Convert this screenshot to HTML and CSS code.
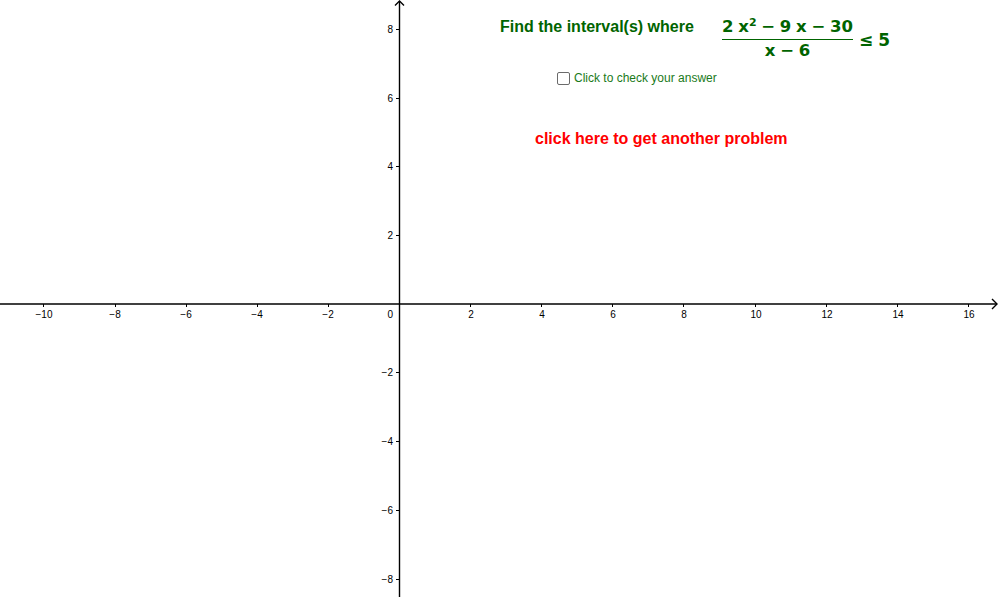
FILE: index.html
```html
<!DOCTYPE html>
<html>
<head>
<meta charset="utf-8">
<link rel="stylesheet" href="styles.css">
</head>
<body>
<div class="canvas">
  <svg class="axes" width="1000" height="600" viewBox="0 0 1000 600">
    <g class="lines">
      <line x1="0" y1="304" x2="997" y2="304"/>
      <polyline points="992,299 997,304 992,309" fill="none"/>
      <line x1="399.5" y1="1" x2="399.5" y2="597"/>
      <polyline points="395,5.5 399.5,1 404,5.5" fill="none"/>
    </g>
    <g class="ticks">
      <line x1="43.5" y1="304" x2="43.5" y2="307"/>
      <line x1="115.5" y1="304" x2="115.5" y2="307"/>
      <line x1="186.5" y1="304" x2="186.5" y2="307"/>
      <line x1="257.5" y1="304" x2="257.5" y2="307"/>
      <line x1="328.5" y1="304" x2="328.5" y2="307"/>
      <line x1="470.5" y1="304" x2="470.5" y2="307"/>
      <line x1="541.5" y1="304" x2="541.5" y2="307"/>
      <line x1="612.5" y1="304" x2="612.5" y2="307"/>
      <line x1="683.5" y1="304" x2="683.5" y2="307"/>
      <line x1="755.5" y1="304" x2="755.5" y2="307"/>
      <line x1="826.5" y1="304" x2="826.5" y2="307"/>
      <line x1="897.5" y1="304" x2="897.5" y2="307"/>
      <line x1="968.5" y1="304" x2="968.5" y2="307"/>
      <line x1="396" y1="29.5" x2="399.5" y2="29.5"/>
      <line x1="396" y1="98.5" x2="399.5" y2="98.5"/>
      <line x1="396" y1="166.5" x2="399.5" y2="166.5"/>
      <line x1="396" y1="235.5" x2="399.5" y2="235.5"/>
      <line x1="396" y1="372.5" x2="399.5" y2="372.5"/>
      <line x1="396" y1="441.5" x2="399.5" y2="441.5"/>
      <line x1="396" y1="510.5" x2="399.5" y2="510.5"/>
      <line x1="396" y1="579.5" x2="399.5" y2="579.5"/>
    </g>
    <g class="xlabels">
      <text x="44" y="318">−10</text>
      <text x="115" y="318">−8</text>
      <text x="186" y="318">−6</text>
      <text x="257" y="318">−4</text>
      <text x="328" y="318">−2</text>
      <text x="471" y="318">2</text>
      <text x="542" y="318">4</text>
      <text x="613" y="318">6</text>
      <text x="684" y="318">8</text>
      <text x="756" y="318">10</text>
      <text x="827" y="318">12</text>
      <text x="898" y="318">14</text>
      <text x="969" y="318">16</text>
    </g>
    <g class="ylabels">
      <text x="393" y="318">0</text>
      <text x="393" y="33">8</text>
      <text x="393" y="102">6</text>
      <text x="393" y="170">4</text>
      <text x="393" y="239">2</text>
      <text x="393" y="376">−2</text>
      <text x="393" y="445">−4</text>
      <text x="393" y="514">−6</text>
      <text x="393" y="583">−8</text>
    </g>
  </svg>

  <div class="prompt">Find the interval(s) where</div>

  <div class="fraction">
    <div class="num">2 x<sup>2</sup> − 9 x − 30</div>
    <div class="bar"></div>
    <div class="den">x − 6</div>
  </div>
  <div class="rel">≤ 5</div>

  <label class="check">
    <span class="box"></span>
    <span class="check-text">Click to check your answer</span>
  </label>

  <div class="another">click here to get another problem</div>
</div>
</body>
</html>
```

FILE: styles.css
```css
html, body {
  margin: 0;
  padding: 0;
  background: #ffffff;
}

.canvas {
  position: relative;
  width: 1000px;
  height: 600px;
  overflow: hidden;
  background: #ffffff;
  font-family: "Liberation Sans", Arial, sans-serif;
}

.axes {
  position: absolute;
  left: 0;
  top: 0;
  display: block;
}

.lines line,
.lines polyline {
  stroke: #000000;
  stroke-width: 1.4;
}

.ticks line {
  stroke: #000000;
  stroke-width: 1;
}

.xlabels text,
.ylabels text {
  font-family: "Liberation Sans", Arial, sans-serif;
  font-size: 10px;
  fill: #000000;
}

.xlabels text {
  text-anchor: middle;
}

.ylabels text {
  text-anchor: end;
}

.prompt {
  position: absolute;
  left: 500px;
  top: 19px;
  font-size: 16px;
  line-height: 16px;
  font-weight: bold;
  color: #006400;
  white-space: nowrap;
}

.fraction {
  position: absolute;
  left: 722px;
  top: 17px;
  display: flex;
  flex-direction: column;
  align-items: center;
  font-family: "DejaVu Sans", sans-serif;
  font-weight: bold;
  font-size: 16.5px;
  color: #006400;
}

.num,
.den {
  line-height: 20px;
  height: 20px;
  white-space: nowrap;
  word-spacing: -1px;
}

.num sup {
  font-size: 11px;
  line-height: 0;
  vertical-align: 6px;
}

.bar {
  align-self: stretch;
  height: 1px;
  background: #006400;
  margin-top: 2px;
  margin-bottom: 1px;
}

.rel {
  position: absolute;
  left: 859px;
  top: 30px;
  font-family: "DejaVu Sans", sans-serif;
  font-weight: bold;
  font-size: 17px;
  line-height: 20px;
  color: #006400;
  white-space: nowrap;
  word-spacing: -1px;
}

.check {
  position: absolute;
  left: 557px;
  top: 70px;
  display: flex;
  align-items: center;
  gap: 4px;
}

.box {
  width: 11px;
  height: 11px;
  border: 1.5px solid #6b6b6b;
  border-radius: 2px;
  background: #ffffff;
}

.check-text {
  font-size: 12px;
  line-height: 16px;
  color: #1a7a1a;
  white-space: nowrap;
}

.another {
  position: absolute;
  left: 535px;
  top: 131px;
  font-size: 16px;
  line-height: 16px;
  font-weight: bold;
  color: #ff0000;
  white-space: nowrap;
}
```
